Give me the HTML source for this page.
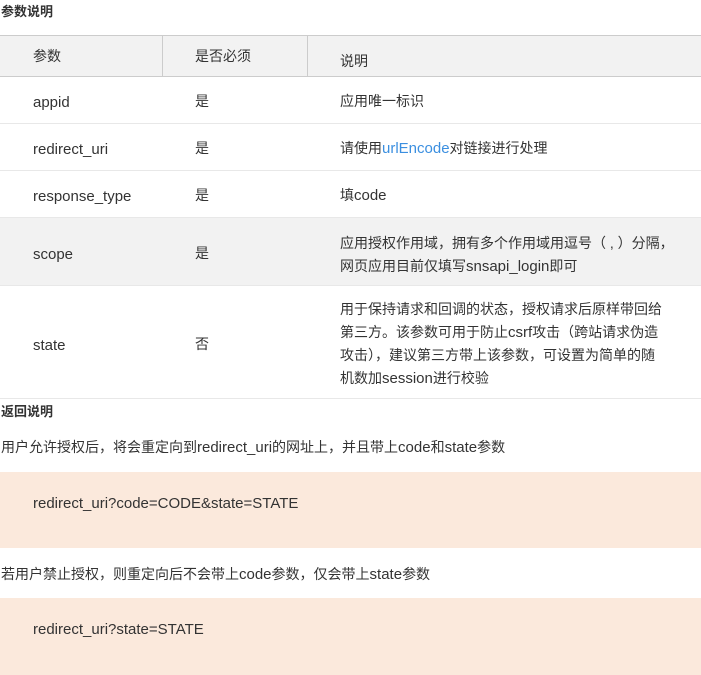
<!DOCTYPE html>
<html><head><meta charset="utf-8"><style>
*{margin:0;padding:0;box-sizing:border-box}
body{width:701px;height:675px;background:#fff;font-family:"Liberation Sans","Noto Sans CJK SC",sans-serif;font-size:14px;color:#333;position:relative;overflow:hidden}
.a{position:absolute;white-space:nowrap;line-height:20px}
.l{font-size:15px}
.b{font-weight:bold;font-size:13px}
.r{position:absolute;left:0;width:701px;border-bottom:1px solid #e8e8e8}
.g{background:#f2f2f2}
.code{position:absolute;left:0;width:701px;background:#fbe9dc}
a{color:#3b8fe0;text-decoration:none}
</style></head><body>
<div class="a b" style="left:1px;top:2px">参数说明</div>
<div class="r g" style="top:35px;height:42px;border-top:1px solid #ccc;border-bottom:1px solid #ccc"></div>
<div style="position:absolute;left:162px;top:35px;width:1px;height:42px;background:#ccc"></div>
<div style="position:absolute;left:307px;top:35px;width:1px;height:42px;background:#ccc"></div>
<div class="a" style="left:33px;top:46px">参数</div>
<div class="a" style="left:195px;top:46px">是否必须</div>
<div class="a" style="left:340px;top:51px">说明</div>

<div class="r" style="top:77px;height:47px"></div>
<div class="a l" style="left:33px;top:93px">appid</div><div class="a" style="left:195px;top:91px">是</div><div class="a" style="left:340px;top:91px">应用唯一标识</div>

<div class="r" style="top:124px;height:47px"></div>
<div class="a l" style="left:33px;top:140px">redirect_uri</div><div class="a" style="left:195px;top:138px">是</div><div class="a" style="left:340px;top:138px">请使用<a class="l">urlEncode</a>对链接进行处理</div>

<div class="r" style="top:171px;height:47px"></div>
<div class="a l" style="left:33px;top:187px">response_type</div><div class="a" style="left:195px;top:185px">是</div><div class="a" style="left:340px;top:185px">填<span class="l">code</span></div>

<div class="r g" style="top:218px;height:68px"></div>
<div class="a l" style="left:33px;top:245px">scope</div><div class="a" style="left:195px;top:243px">是</div>
<div class="a" style="left:340px;top:232px;line-height:23px">应用授权作用域，拥有多个作用域用逗号（ , ）分隔，<br>网页应用目前仅填写<span class="l">snsapi_login</span>即可</div>

<div class="r" style="top:286px;height:113px"></div>
<div class="a l" style="left:33px;top:336px">state</div><div class="a" style="left:195px;top:334px">否</div>
<div class="a" style="left:340px;top:298px;line-height:22.5px">用于保持请求和回调的状态，授权请求后原样带回给<br>第三方。该参数可用于防止<span class="l">csrf</span>攻击（跨站请求伪造<br>攻击），建议第三方带上该参数，可设置为简单的随<br>机数加<span class="l">session</span>进行校验</div>

<div class="a b" style="left:1px;top:402px">返回说明</div>
<div class="a" style="left:1px;top:437px">用户允许授权后，将会重定向到<span class="l">redirect_uri</span>的网址上，并且带上<span class="l">code</span>和<span class="l">state</span>参数</div>
<div class="code" style="top:472px;height:76px"></div>
<div class="a l" style="left:33px;top:494px">redirect_uri?code=CODE&amp;state=STATE</div>
<div class="a" style="left:1px;top:564px">若用户禁止授权，则重定向后不会带上<span class="l">code</span>参数，仅会带上<span class="l">state</span>参数</div>
<div class="code" style="top:598px;height:77px"></div>
<div class="a l" style="left:33px;top:620px">redirect_uri?state=STATE</div>
</body></html>
